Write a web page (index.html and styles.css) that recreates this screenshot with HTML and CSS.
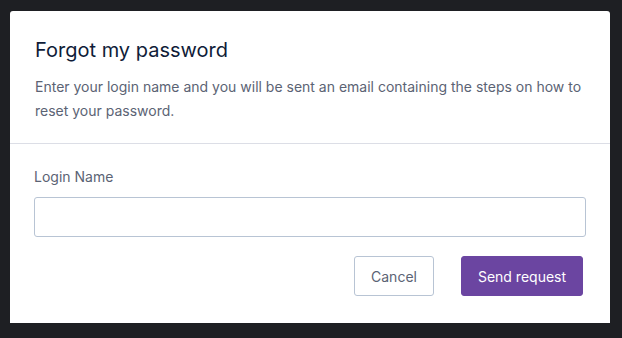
FILE: index.html
```html
<!DOCTYPE html>
<html>
<head>
<meta charset="utf-8">
<link rel="stylesheet" href="styles.css">
</head>
<body>
<div class="modal">
  <div class="modal-header">
    <h1 class="title">Forgot my password</h1>
    <p class="desc">Enter your login name and you will be sent an email containing the steps on how to reset your password.</p>
  </div>
  <div class="modal-body">
    <label class="label" for="login">Login Name</label>
    <input class="input" id="login" type="text">
    <div class="actions">
      <button class="btn btn-secondary">Cancel</button>
      <button class="btn btn-primary">Send request</button>
    </div>
  </div>
</div>
</body>
</html>
```
FILE: styles.css
```css
html, body {
  margin: 0;
  padding: 0;
  background: #1e1f23;
  font-family: Inter, "Noto Sans", sans-serif;
}
body {
  padding: 11px 12px 15px 10px;
}
.modal {
  width: 600px;
  background: #ffffff;
  border-radius: 3px 3px 0 0;
}
.modal-header {
  padding: 25px 25px 20px 25px;
  border-bottom: 1px solid #dcdee6;
}
.title {
  margin: 0;
  font-size: 20px;
  line-height: 28px;
  font-weight: 400;
  color: #0f1c38;
}
.desc {
  margin: 11px 0 0 0;
  font-size: 14px;
  line-height: 24px;
  color: #5b6374;
}
.modal-body {
  padding: 23px 24px 27px 24px;
  display: flex;
  flex-direction: column;
}
.label {
  font-size: 14px;
  line-height: 20px;
  color: #5b6374;
  margin-bottom: 10px;
}
.input {
  height: 40px;
  box-sizing: border-box;
  border: 1px solid #b8c4d4;
  border-radius: 3px;
  margin: 0;
  padding: 0 10px;
  font-family: inherit;
  font-size: 14px;
}
.actions {
  display: flex;
  justify-content: flex-end;
  gap: 27px;
  margin-top: 19px;
  padding-right: 3px;
}
.btn {
  height: 40px;
  box-sizing: border-box;
  border-radius: 3px;
  font-family: inherit;
  font-size: 14px;
  padding: 0;
  white-space: nowrap;
  cursor: pointer;
}
.btn-secondary {
  width: 80px;
  background: #ffffff;
  border: 1px solid #b8c4d4;
  color: #5b6374;
}
.btn-primary {
  width: 122px;
  background: #6b45a1;
  border: 1px solid #6b45a1;
  color: #ffffff;
}
```
